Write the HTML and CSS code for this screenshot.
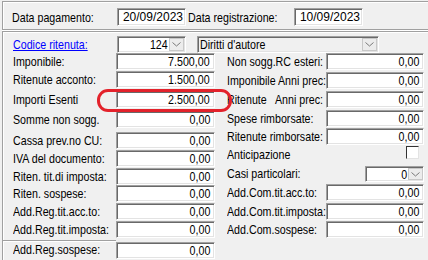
FILE: index.html
```html
<!DOCTYPE html>
<html lang="it">
<head>
<meta charset="utf-8">
<title>Ritenuta</title>
<link rel="stylesheet" href="styles.css">
</head>
<body>
<div class="form">
  <div class="group group-top">
    <div class="date-row">
      <span class="lbl lbl-date1"><span class="t">Data pagamento:</span></span>
      <span class="box date">20/09/2023</span>
      <span class="lbl lbl-date2"><span class="t">Data registrazione:</span></span>
      <span class="box date">10/09/2023</span>
    </div>
  </div>
  <div class="group group-main">
    <div class="code-row">
      <a class="lbl link" href="#"><span class="t">Codice ritenuta:</span></a>
      <span class="box combo combo-code"><span class="val"><span class="t">124</span></span><span class="drop"><svg width="9" height="5" viewBox="0 0 9 5"><path d="M0.5 0.5 L4.5 4 L8.5 0.5" fill="none" stroke="#7a7a7a" stroke-width="1"/></svg></span></span>
      <span class="box combo combo-desc"><span class="val"><span class="t">Diritti d'autore</span></span><span class="drop"><svg width="9" height="5" viewBox="0 0 9 5"><path d="M0.5 0.5 L4.5 4 L8.5 0.5" fill="none" stroke="#7a7a7a" stroke-width="1"/></svg></span></span>
    </div>
    <div class="cols">
      <div class="col col-left">
        <div class="row h18"><span class="lbl"><span class="t">Imponibile:</span></span><span class="box num"><span class="t">7.500,00</span></span></div>
        <div class="row h20"><span class="lbl"><span class="t">Ritenute acconto:</span></span><span class="box num"><span class="t">1.500,00</span></span></div>
        <div class="row h20"><span class="lbl"><span class="t">Importi Esenti</span></span><span class="box num"><span class="t">2.500,00</span></span></div>
        <div class="row h21"><span class="lbl"><span class="t">Somme non sogg.</span></span><span class="box num"><span class="t">0,00</span></span></div>
        <div class="row h18"><span class="lbl"><span class="t">Cassa prev.no CU:</span></span><span class="box num"><span class="t">0,00</span></span></div>
        <div class="row h18"><span class="lbl"><span class="t">IVA del documento:</span></span><span class="box num"><span class="t">0,00</span></span></div>
        <div class="row h17"><span class="lbl"><span class="t">Riten. tit.di imposta:</span></span><span class="box num"><span class="t">0,00</span></span></div>
        <div class="row h18"><span class="lbl"><span class="t">Riten. sospese:</span></span><span class="box num"><span class="t">0,00</span></span></div>
        <div class="row h18"><span class="lbl"><span class="t">Add.Reg.tit.acc.to:</span></span><span class="box num"><span class="t">0,00</span></span></div>
        <div class="row h19"><span class="lbl"><span class="t">Add.Reg.tit.imposta:</span></span><span class="box num"><span class="t">0,00</span></span></div>
        <div class="row h19 row-split"><span class="lbl"><span class="t">Add.Reg.sospese:</span></span><span class="box num"><span class="t">0,00</span></span></div>
      </div>
      <div class="col col-right">
        <div class="row h19"><span class="lbl"><span class="t">Non sogg.RC esteri:</span></span><span class="box num"><span class="t">0,00</span></span></div>
        <div class="row h19"><span class="lbl"><span class="t">Imponibile Anni prec:</span></span><span class="box num"><span class="t">0,00</span></span></div>
        <div class="row h19"><span class="lbl"><span class="t">Ritenute&nbsp;&nbsp; Anni prec:</span></span><span class="box num"><span class="t">0,00</span></span></div>
        <div class="row h18"><span class="lbl"><span class="t">Spese rimborsate:</span></span><span class="box num"><span class="t">0,00</span></span></div>
        <div class="row h18"><span class="lbl"><span class="t">Ritenute rimborsate:</span></span><span class="box num"><span class="t">0,00</span></span></div>
        <div class="row h19"><span class="lbl"><span class="t">Anticipazione</span></span><span class="cell"><span class="check"></span></span></div>
        <div class="row h19"><span class="lbl"><span class="t">Casi particolari:</span></span><span class="cell"><span class="box combo combo-casi"><span class="val"><span class="t">0</span></span><span class="drop"><svg width="9" height="5" viewBox="0 0 9 5"><path d="M0.5 0.5 L4.5 4 L8.5 0.5" fill="none" stroke="#7a7a7a" stroke-width="1"/></svg></span></span></span></div>
        <div class="row h19"><span class="lbl"><span class="t">Add.Com.tit.acc.to:</span></span><span class="box num"><span class="t">0,00</span></span></div>
        <div class="row h18"><span class="lbl"><span class="t">Add.Com.tit.imposta:</span></span><span class="box num"><span class="t">0,00</span></span></div>
        <div class="row h18"><span class="lbl"><span class="t">Add.Com.sospese:</span></span><span class="box num"><span class="t">0,00</span></span></div>
      </div>
    </div>
  </div>
  <div class="highlight"></div>
</div>
</body>
</html>
```

FILE: styles.css
```css
* {
  box-sizing: border-box;
  margin: 0;
  padding: 0;
}

html, body {
  width: 428px;
  height: 260px;
  overflow: hidden;
  background: #f0f0f0;
}

body {
  font-family: "Liberation Sans", Arial, sans-serif;
  font-size: 13px;
  color: #000;
}

.form {
  position: relative;
  width: 428px;
  height: 260px;
}

/* condensed UI text (the dialog font is narrow) */
.t {
  display: inline-block;
  white-space: nowrap;
  transform: scaleX(0.82);
  transform-origin: left center;
}

.num .t,
.combo .val .t {
  transform-origin: right center;
}

.combo-desc .val .t {
  transform-origin: left center;
}

/* etched group boxes */
.group {
  margin-left: 2px;
  border: 1px solid #a0a0a0;
  border-right: none;
  box-shadow: inset 1px 1px 0 #fff;
}

.group-top {
  margin-top: 1px;
  height: 29px;
  box-shadow: inset 1px 1px 0 #fff, 0 1px 0 #fff;
}

.group-main {
  margin-top: 1px;
  height: 240px;
  border-bottom: none;
}

.lbl {
  display: block;
  white-space: nowrap;
  line-height: 17px;
  height: 17px;
  flex: none;
}

/* top date row */
.date-row {
  display: flex;
  align-items: center;
  padding: 6px 0 0 9px;
}

.lbl-date1 {
  width: 105px;
}

.lbl-date2 {
  width: 106px;
  margin-left: 2px;
}

/* sunken edit box */
.box {
  display: flex;
  align-items: center;
  flex: none;
  height: 17px;
  background: #fff;
  border: 1px solid;
  border-color: #a0a0a0 #fff #fff #a0a0a0;
  box-shadow: inset 1px 1px 0 #696969, inset -1px -1px 0 #e3e3e3;
  white-space: nowrap;
  overflow: hidden;
}

.date {
  width: 69px;
  height: 18px;
  justify-content: flex-end;
  padding-right: 2px;
  font-size: 12px;
}

/* codice ritenuta row */
.code-row {
  display: flex;
  align-items: flex-start;
  padding: 4px 0 0 10px;
  height: 21px;
}

.code-row .lbl {
  width: 104px;
}

.link,
.link .t {
  color: #0000ff;
  text-decoration: underline;
}

.combo {
  padding: 0 1px 0 2px;
}

.combo .val {
  flex: 1;
  text-align: right;
  padding-right: 1px;
  line-height: 13px;
}

.drop {
  flex: none;
  display: flex;
  align-items: center;
  justify-content: center;
  width: 15px;
  height: 13px;
  background: #ececec;
  border: 1px solid #c8c8c8;
}

.combo-code {
  width: 69px;
}

.combo-desc {
  width: 182px;
  margin-left: 11px;
  background: #f0f0f0;
  padding-left: 2px;
}

.combo-desc .val {
  text-align: left;
}

.combo-casi {
  width: 59px;
  height: 16px;
  margin-top: 1px;
  padding-right: 0;
}

.combo-casi .drop {
  height: 12px;
}

/* two columns of fields */
.cols {
  display: grid;
  grid-template-columns: 212px 1fr;
}

.col {
  display: flex;
  flex-direction: column;
}

.row {
  display: flex;
  align-items: flex-start;
  flex: none;
}

.h17 { height: 17px; }
.h18 { height: 18px; }
.h19 { height: 19px; }
.h20 { height: 20px; }
.h21 { height: 21px; }

.col-left .lbl {
  width: 113px;
  padding-left: 10px;
}

.col-left .num {
  width: 99px;
}

.col-right .lbl {
  width: 111px;
  padding-left: 12px;
}

.col-right .num {
  width: 98px;
}

.num {
  justify-content: flex-end;
  padding-right: 4px;
}

.row-split .lbl {
  border-top: 1px solid #a0a0a0;
  box-shadow: inset 0 1px 0 #fff;
  height: 19px;
  line-height: 17px;
}

.row-split .num {
  margin-top: 2px;
}

.cell {
  display: flex;
  justify-content: flex-end;
  width: 98px;
  flex: none;
}

.check {
  display: block;
  width: 13px;
  height: 13px;
  margin-right: 5px;
  background: #fff;
  border: 1px solid;
  border-color: #333 #e3e3e3 #e3e3e3 #333;
}

/* red annotation drawn over the form */
.highlight {
  position: absolute;
  left: 97px;
  top: 88px;
  width: 135px;
  height: 23px;
  border: 3px solid #e3222b;
  border-radius: 11px;
  pointer-events: none;
}
```
